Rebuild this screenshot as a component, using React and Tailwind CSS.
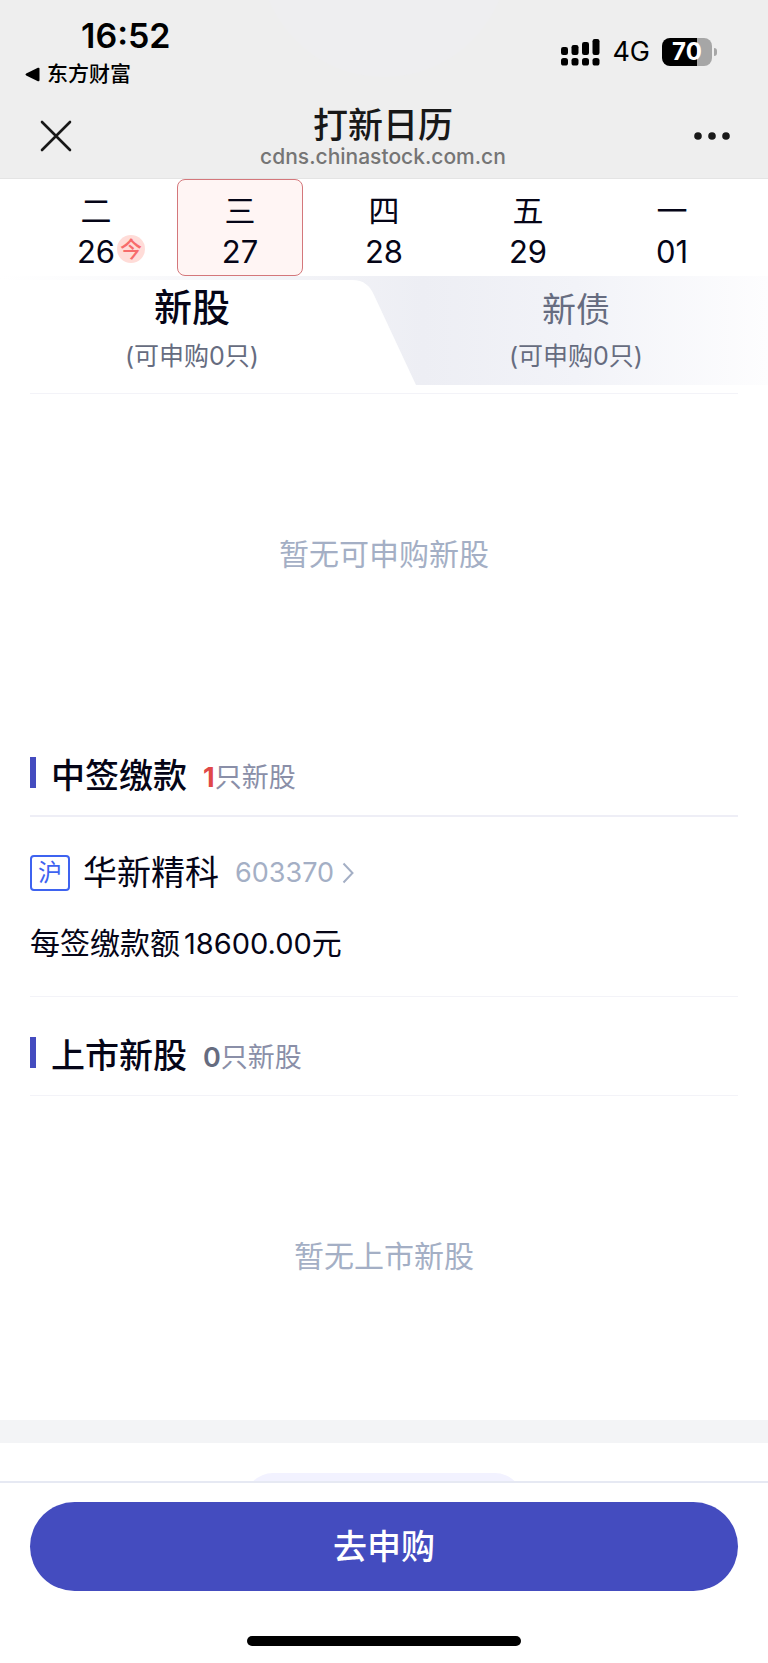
import React, { useState } from "react";

const days = [
  { week: "二", date: "26", today: true },
  { week: "三", date: "27" },
  { week: "四", date: "28" },
  { week: "五", date: "29" },
  { week: "一", date: "01" },
];

const StatusBar = () => (
  <div className="relative flex justify-between pt-4 pl-6 pr-[51px]">
    <div>
      <p className="pl-[57px] text-[34px] leading-10 font-semibold text-black">16:52</p>
      <a href="#back" className="flex items-center gap-[7px] text-[21px] leading-9 font-medium text-black">
        <svg width="16" height="15" viewBox="0 0 16 15" aria-hidden="true">
          <path d="M15.5 1.8v11.4q0 1.6-1.6 1L2.2 8.6q-1.6-1.1 0-2.2L13.9.8q1.6-.6 1.6 1z" />
        </svg>
        东方财富
      </a>
    </div>
    <div className="flex h-[71px] items-center gap-3">
      <svg width="39" height="28" viewBox="0 0 39 28" aria-hidden="true">
        <rect x="0" y="9" width="7" height="8" rx="2.2" />
        <rect x="10.5" y="7" width="7" height="10" rx="2.2" />
        <rect x="21" y="4" width="7" height="13" rx="2.2" />
        <rect x="31.5" y="1" width="7" height="16" rx="2.2" />
        <rect x="0" y="20" width="7" height="7.5" rx="2.6" />
        <rect x="10.5" y="20" width="7" height="7.5" rx="2.6" />
        <rect x="21" y="20" width="7" height="7.5" rx="2.6" />
        <rect x="31.5" y="20" width="7" height="7.5" rx="2.6" />
      </svg>
      <span className="text-[27px] leading-8 text-black">4G</span>
      <div className="flex items-center gap-0.5">
        <div className="flex h-7 w-[50px] items-center justify-center rounded-lg bg-[linear-gradient(to_right,#000_70%,#a6a6a6_70%)] text-2xl leading-7 font-bold text-white">
          70
        </div>
        <div className="h-2 w-[3px] rounded-r-full bg-[#a6a6a6]" />
      </div>
    </div>
  </div>
);

const TitleBar = () => (
  <div className="relative flex h-[86px] items-center justify-between px-9 pt-0.5">
    <button type="button" aria-label="关闭" className="p-1">
      <svg width="32" height="32" viewBox="0 0 32 32" fill="none" stroke="#181818" strokeWidth="2.6" strokeLinecap="round">
        <path d="M2 2l28 28M30 2L2 30" />
      </svg>
    </button>
    <div className="pt-0.5 text-center">
      <h1 className="text-[35px] leading-10 font-medium text-[#181818]">打新日历</h1>
      <p className="text-[21px] leading-6 font-medium text-[#757575]">cdns.chinastock.com.cn</p>
    </div>
    <button type="button" aria-label="更多" className="py-3">
      <svg width="42" height="8" viewBox="0 0 42 8" fill="#181818">
        <circle cx="8" cy="4" r="3.8" />
        <circle cx="22" cy="4" r="3.8" />
        <circle cx="36" cy="4" r="3.8" />
      </svg>
    </button>
  </div>
);

const SectionTitle = ({ title, count, countColor }) => (
  <div className="flex items-center">
    <span className="mb-2 h-[31px] w-1.5 bg-[#444cbf]" />
    <h2 className="ml-[15px] text-[34px] leading-10 font-medium text-[#050517]">{title}</h2>
    <p className="ml-4 mt-1 text-[27px] leading-10 text-[#8a8fa8]">
      <span className={countColor}>{count}</span>只新股
    </p>
  </div>
);

const App = () => {
  const [activeDay, setActiveDay] = useState("27");
  const [tab, setTab] = useState("stock");

  return (
    <div className="w-full bg-white font-['Inter','Noto_Sans_CJK_SC',sans-serif] text-[#050517]">
      <header className="relative overflow-hidden border-b border-[#e4e4e4] bg-[#eeeeee]">
        <div className="absolute -top-[173px] left-1/2 size-[250px] -translate-x-1/2 rounded-full bg-[#eeeef0]" />
        <StatusBar />
        <TitleBar />
      </header>

      {/* Date strip */}
      <div className="grid grid-cols-5 px-6">
        {days.map((day) => (
          <button
            key={day.date}
            type="button"
            onClick={() => setActiveDay(day.date)}
            className={
              "mx-[9px] flex h-[97px] flex-col items-center justify-center rounded-lg border pt-[7px] text-[31px] leading-[41px] " +
              (activeDay === day.date
                ? "border-[#d4777b] bg-[#fff5f4]"
                : "border-transparent")
            }
          >
            <span>{day.week}</span>
            <span className="relative">
              {day.date}
              {day.today && (
                <span className="absolute top-1 left-full ml-0.5 flex size-7 items-center justify-center rounded-full bg-[#ffdcd8] text-[22px] leading-7 font-medium text-[#f76b6b]">
                  今
                </span>
              )}
            </span>
          </button>
        ))}
      </div>

      {/* Stock / bond tabs */}
      <div className="relative bg-[linear-gradient(to_right,#ffffff,#edeef4_55%,#f2f3f8_75%,#fdfdfe)]">
        <div className="absolute inset-0 flex pt-1">
          <div className="flex-1 bg-white" />
          <svg className="h-full w-16" viewBox="0 0 64 105" preserveAspectRatio="none" fill="#fff" aria-hidden="true">
            <path d="M0 0C12 0 18 6 22 15L64 105H0z" />
          </svg>
          <div className="flex-1" />
        </div>
        <div className="relative grid h-[109px] grid-cols-2 text-[#666c80]">
          <button type="button" onClick={() => setTab("stock")} className="flex flex-col items-center">
            <span
              className={
                tab === "stock"
                  ? "text-[38px] leading-[62px] font-medium text-[#050517]"
                  : "mt-1.5 text-[34px] leading-[56px]"
              }
            >
              新股
            </span>
            <span className="text-[25px] leading-9">(可申购0只)</span>
          </button>
          <button type="button" onClick={() => setTab("bond")} className="flex flex-col items-center">
            <span
              className={
                tab === "bond"
                  ? "text-[38px] leading-[62px] font-medium text-[#050517]"
                  : "mt-1.5 text-[34px] leading-[56px]"
              }
            >
              新债
            </span>
            <span className="text-[25px] leading-9">(可申购0只)</span>
          </button>
        </div>
      </div>

      <main className="px-[30px] pt-2">
        <section className="border-t border-[#f3f3f8] pt-[138px] pb-[178px]">
          <p className="text-center text-[30px] leading-[44px] text-[#a4afc5]">暂无可申购新股</p>
        </section>

        <section>
          <SectionTitle title="中签缴款" count="1" countColor="font-bold text-[#e04848]" />
          <div className="mt-[17px] border-t-2 border-b border-t-[#eeeef6] border-b-[#f3f3f8] pt-9 pb-[30px]">
            <a href="#603370" className="flex items-center">
              <span className="flex h-9 w-10 items-center justify-center rounded border-2 border-[#3e63f0] text-2xl leading-8 text-[#3e63f0]">
                沪
              </span>
              <span className="ml-[13px] text-[34px] leading-10">华新精科</span>
              <span className="ml-4 text-[27px] leading-10 text-[#a4afc5]">603370</span>
              <svg className="ml-2" width="12" height="22" viewBox="0 0 12 22" fill="none" stroke="#a4afc5" strokeWidth="2">
                <path d="M1.5 1.5l9 9.5-9 9.5" />
              </svg>
            </a>
            <p className="mt-7 text-[30px] leading-[44px]">
              每签缴款额<span className="ml-1 text-[29px]">18600.00</span>元
            </p>
          </div>
        </section>

        <section className="pt-[37px]">
          <SectionTitle title="上市新股" count="0" countColor="font-semibold text-[#666c80]" />
          <div className="mt-[17px] border-t border-[#f3f3f8] pt-[138px] pb-[142px]">
            <p className="text-center text-[30px] leading-[44px] text-[#a4afc5]">暂无上市新股</p>
          </div>
        </section>
      </main>

      <div className="h-[23px] bg-[#f3f4f6]" />
      <div className="flex h-[38px] items-start justify-center overflow-hidden pt-[30px]">
        <div className="h-14 w-[278px] shrink-0 rounded-full bg-[#f2f2ff]" />
      </div>

      <footer className="sticky bottom-0 border-t-2 border-[#e6e9f3] bg-white px-[30px] pt-[19px] pb-[17px]">
        <button type="button" className="h-[89px] w-full rounded-full bg-[#444cbf] text-[34px] leading-10 font-medium text-white">
          去申购
        </button>
        <div className="mx-auto mt-[45px] h-2.5 w-[274px] rounded-full bg-black" />
      </footer>
    </div>
  );
};

export default App;
